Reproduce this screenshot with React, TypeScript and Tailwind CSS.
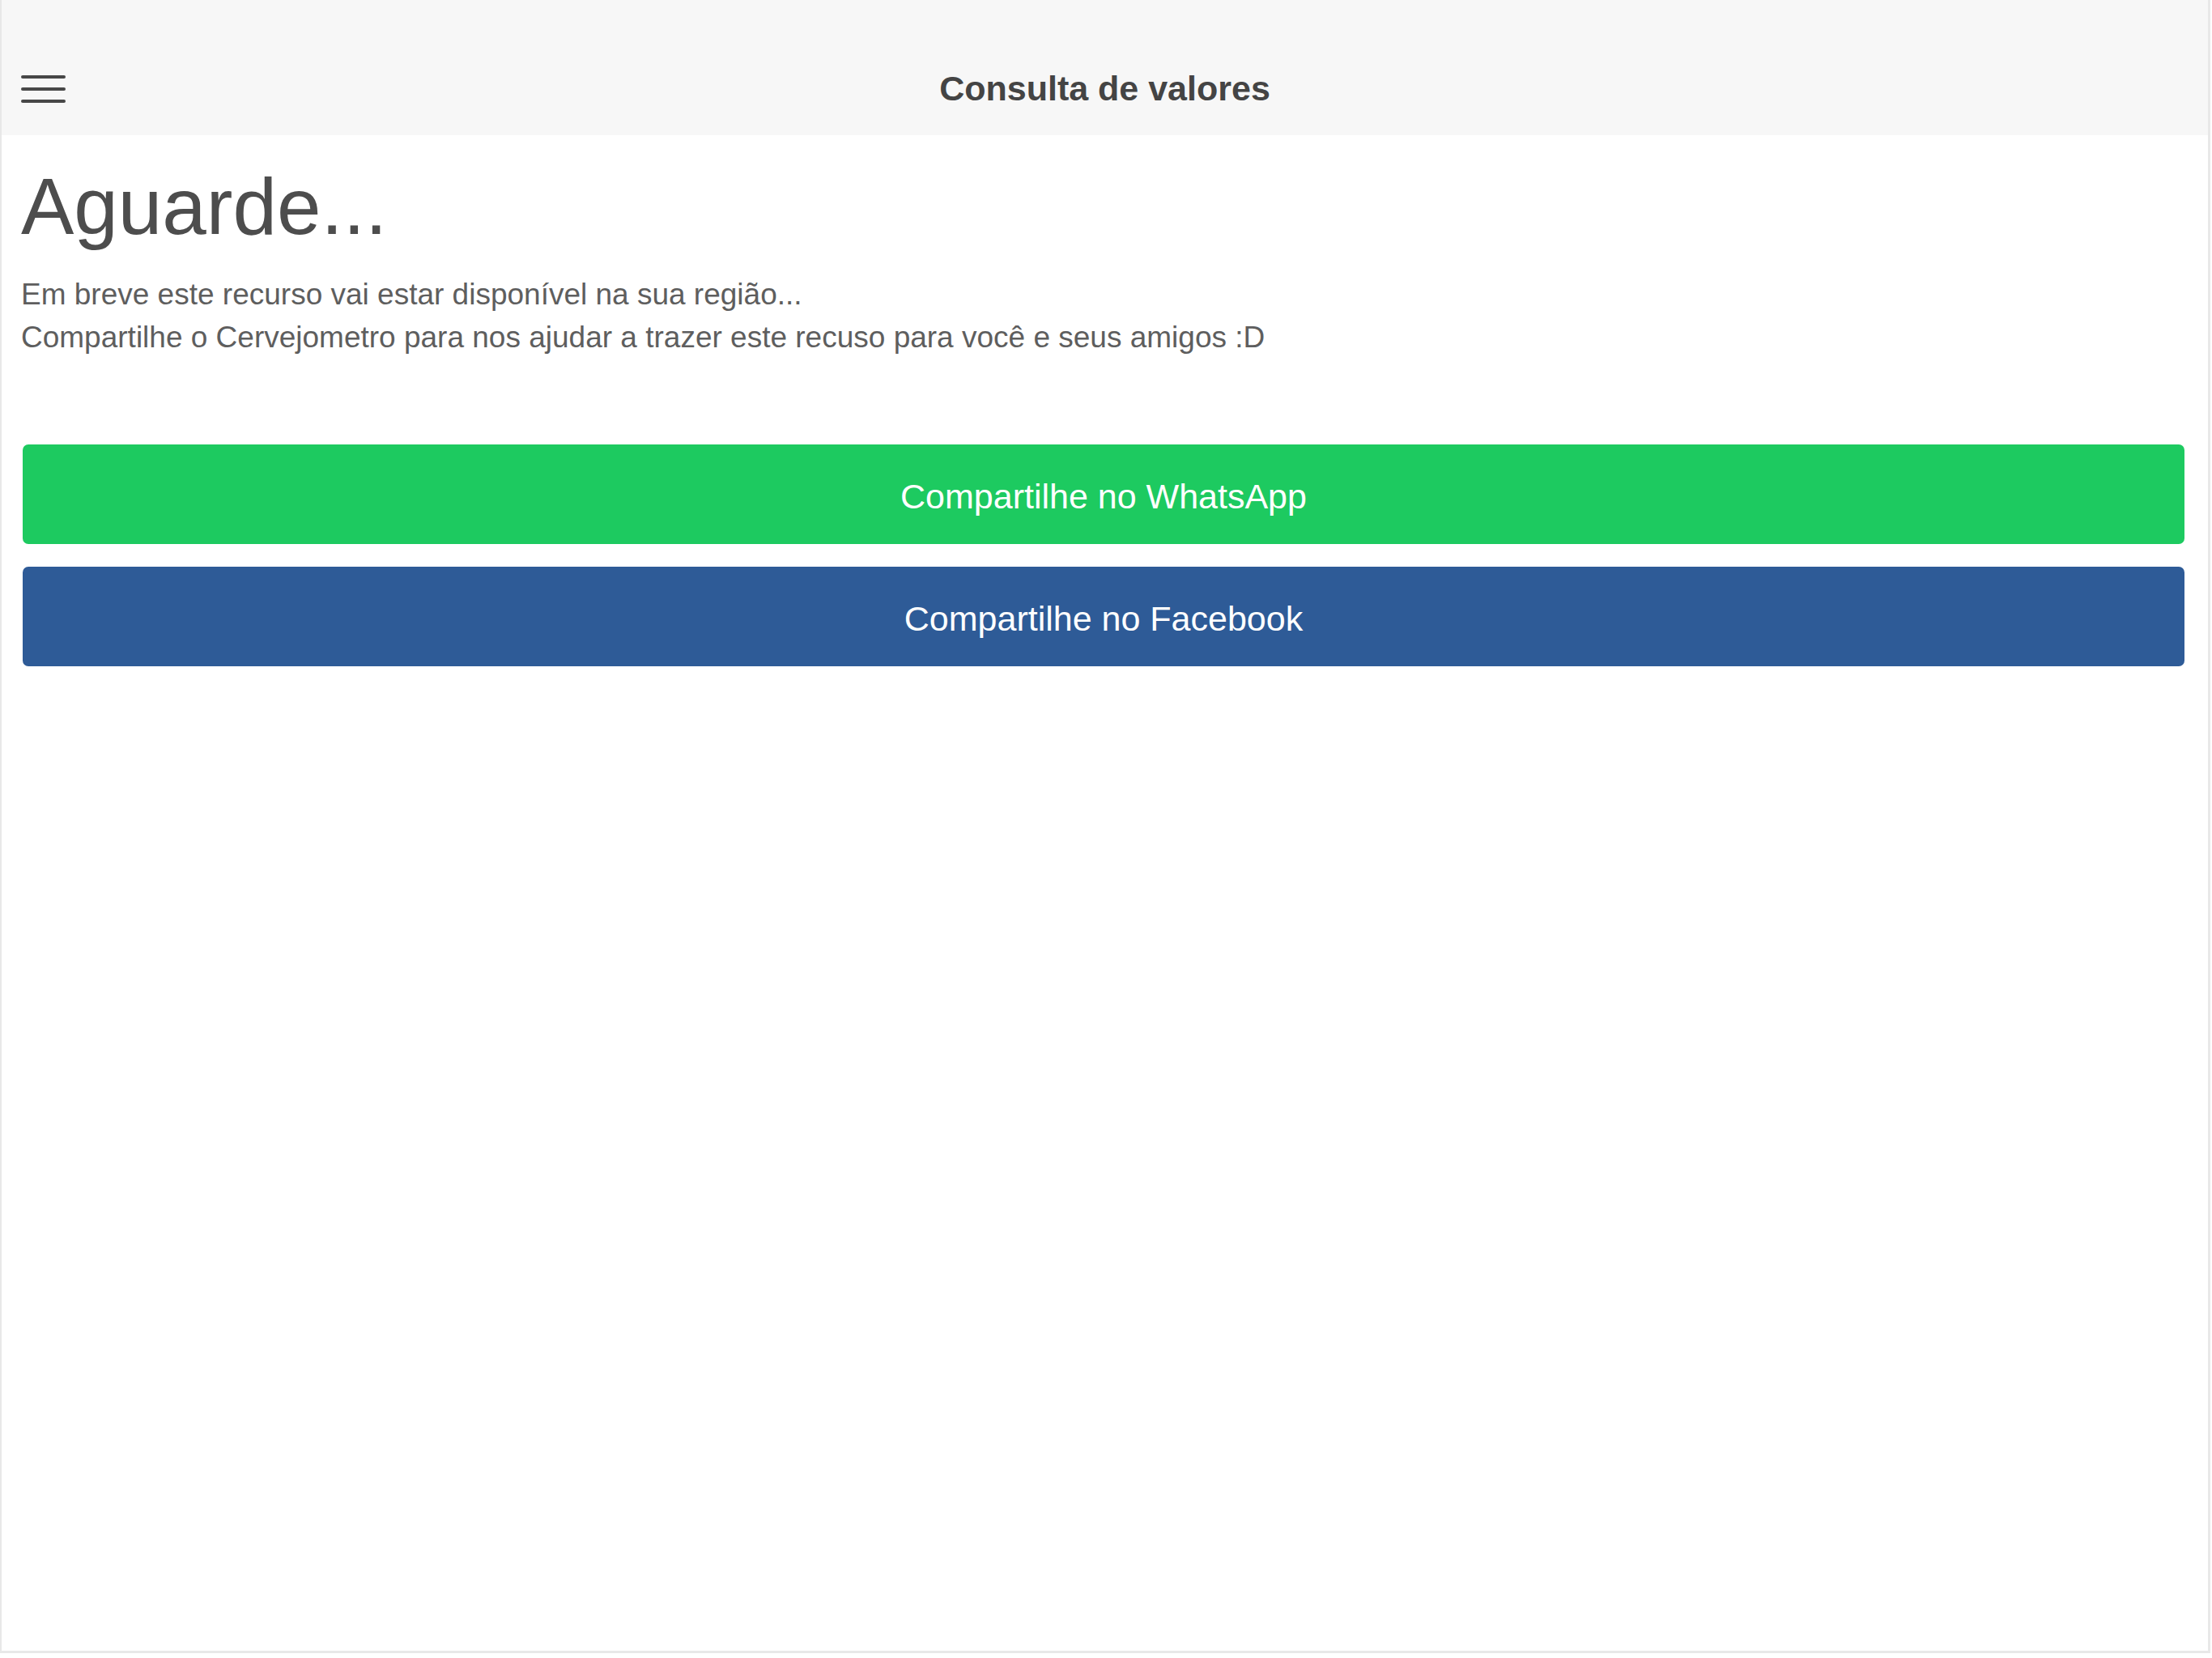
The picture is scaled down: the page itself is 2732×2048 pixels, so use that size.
import React from "react";

// hamburger icon, three bars
function MenuIcon() {
  return (
    <div className="flex flex-col gap-[11px] w-[55px]">
      <span className="block h-[4px] rounded-full bg-[#474747]" />
      <span className="block h-[4px] rounded-full bg-[#474747]" />
      <span className="block h-[4px] rounded-full bg-[#474747]" />
    </div>
  );
}

type ShareButtonProps = {
  label: string;
  className: string;
};

function ShareButton({ label, className }: ShareButtonProps) {
  return (
    <button
      className={`w-full h-[123px] pt-[6px] rounded-[7px] flex items-center justify-center text-white text-[43px] ${className}`}
    >
      {label}
    </button>
  );
}

export default function App() {
  return (
    <div
      className="w-[2732px] h-[2048px] bg-white"
      style={{ fontFamily: '"Liberation Sans", Arial, sans-serif' }}
    >
      <div className="w-[2730px] h-[2042px] border-l-2 border-r-[3px] border-b-[3px] border-[#e8e8e8] flex flex-col">
        <header className="h-[167px] bg-[#f7f7f7] pt-[52px] flex items-center relative">
          <div className="pl-[24px] flex items-center">
            <MenuIcon />
          </div>
          <h2 className="absolute left-0 right-0 top-[52px] h-[115px] flex items-center justify-center text-[43px] font-bold text-[#444444] pointer-events-none">
            Consulta de valores
          </h2>
        </header>

        <main className="px-[24px]">
          <h1 className="mt-[33px] text-[98px] leading-[110px] text-[#4d4d4d]">
            Aguarde...
          </h1>
          <p className="mt-[27px] text-[37px] leading-[53px] text-[#5e5e5e]">
            Em breve este recurso vai estar disponível na sua região...
            <br />
            Compartilhe o Cervejometro para nos ajudar a trazer este recuso para você e seus amigos :D
          </p>

          <div className="mt-[106px] ml-[2px] mr-[5px] flex flex-col gap-[28px]">
            <ShareButton label="Compartilhe no WhatsApp" className="bg-[#1dca60]" />
            <ShareButton label="Compartilhe no Facebook" className="bg-[#2e5b97]" />
          </div>
        </main>
      </div>
    </div>
  );
}
